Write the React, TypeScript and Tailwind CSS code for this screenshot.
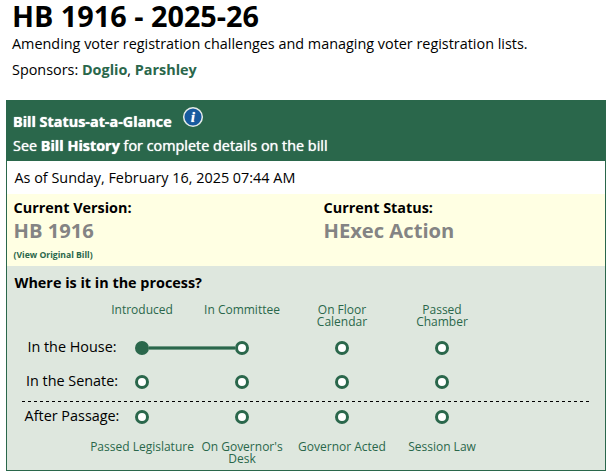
import { Fragment } from "react";

const topLabels = ["Introduced", "In Committee", "On Floor Calendar", "Passed Chamber"];
const bottomLabels = ["Passed Legislature", "On Governor's Desk", "Governor Acted", "Session Law"];

function InfoIcon() {
  return (
    <svg width="22" height="22" viewBox="0 0 22 22" className="-mt-[11px] ml-2.5">
      <circle cx="11" cy="11" r="9.3" fill="#175a9f" stroke="#e6ece8" strokeWidth="1.5" />
      <text
        x="11"
        y="15.5"
        textAnchor="middle"
        fill="#fff"
        className="font-['Liberation_Serif',serif] text-[14px] font-bold italic"
      >
        i
      </text>
    </svg>
  );
}

function StepLabels({ labels }: { labels: string[] }) {
  return (
    <div className="flex pl-[85px]">
      {labels.map((label) => (
        <div
          key={label}
          className="flex w-[100px] justify-center text-center text-[12px] leading-[12px] text-[#2a674b]"
        >
          <span className={/^Passed L|Acted/.test(label) ? "whitespace-nowrap" : "px-2"}>{label}</span>
        </div>
      ))}
    </div>
  );
}

function StepRow({ title, reached = -1, current = 0 }: { title: string; reached?: number; current?: number }) {
  return (
    <div className="flex h-[14px] items-center pl-[15px]">
      <div className="-mt-[2px] w-[100px] text-center leading-[20px] whitespace-nowrap">{title}</div>
      <div className="flex items-center pl-[13px]">
        {[0, 1, 2, 3].map((step) => (
          <Fragment key={step}>
            {step > 0 && (
              <div
                className={`h-[4px] w-[86px] ${
                  step <= current ? "border-y border-[#6f9a84] bg-[#2a674b] bg-clip-padding" : ""
                }`}
              />
            )}
            <div
              className={`h-[14px] w-[14px] rounded-full border-[3px] border-[#2a674b] ${
                step <= reached ? "bg-[#2a674b]" : "bg-white"
              }`}
            />
          </Fragment>
        ))}
      </div>
    </div>
  );
}

function App() {
  return (
    <div className="h-[475px] w-[615px] overflow-hidden bg-white font-['Open_Sans',sans-serif] text-[14.4px] text-black">
      <div className="h-[100px] pl-3">
        <h1 className="h-[34px] text-[28.8px] leading-[32px] font-bold">HB 1916 - 2025-26</h1>
        <p className="leading-[20px]">Amending voter registration challenges and managing voter registration lists.</p>
        <p className="mt-[6px] leading-[20px]">
          Sponsors: <a className="font-bold text-[#2a674b]">Doglio</a>,{" "}
          <a className="font-bold text-[#2a674b]">Parshley</a>
        </p>
      </div>
      <div className="ml-[6px] h-[371px] w-[600px] border border-[#2a674b]">
        <div className="h-[60px] bg-[#2a674b] pt-[10px] pl-[6px] text-white [text-shadow:0_0_1px_#fff]">
          <div className="flex h-[22px] items-center leading-[20px] font-bold">
            Bill Status-at-a-Glance
            <InfoIcon />
          </div>
          <div className="mt-[3px] leading-[20px]">
            See <b>Bill History</b> for complete details on the bill
          </div>
        </div>
        <div className="h-[33px] pl-[7.5px] leading-[33px]">As of Sunday, February 16, 2025 07:44 AM</div>
        <div className="flex h-[72px] bg-[#ffffe3] pl-[6.5px]">
          <div className="w-[310px] pt-[4px] font-bold">
            <div className="leading-[20px]">Current Version:</div>
            <div className="text-[20.16px] leading-[25px] text-[#848484]">HB 1916</div>
            <div className="mt-[6px] text-[8.64px] leading-[12px] text-[#2a674b]">(View Original Bill)</div>
          </div>
          <div className="pt-[4px] font-bold">
            <div className="leading-[20px]">Current Status:</div>
            <div className="text-[20.16px] leading-[25px] text-[#848484]">HExec Action</div>
          </div>
        </div>
        <div className="h-[204px] bg-[#dee7de] pt-[7px]">
          <div className="pl-[7.5px] leading-[20px] font-bold">Where is it in the process?</div>
          <div className="mt-[11px] h-[37px]">
            <StepLabels labels={topLabels} />
          </div>
          <StepRow title="In the House:" reached={0} current={1} />
          <div className="h-[20px]" />
          <StepRow title="In the Senate:" />
          <svg width="599" height="21" className="block">
            <line x1="15" y1="12.5" x2="584" y2="12.5" stroke="#000" strokeDasharray="3 3" />
          </svg>
          <StepRow title="After Passage:" />
          <div className="mt-[17px]">
            <StepLabels labels={bottomLabels} />
          </div>
        </div>
      </div>
    </div>
  );
}

export default App;
